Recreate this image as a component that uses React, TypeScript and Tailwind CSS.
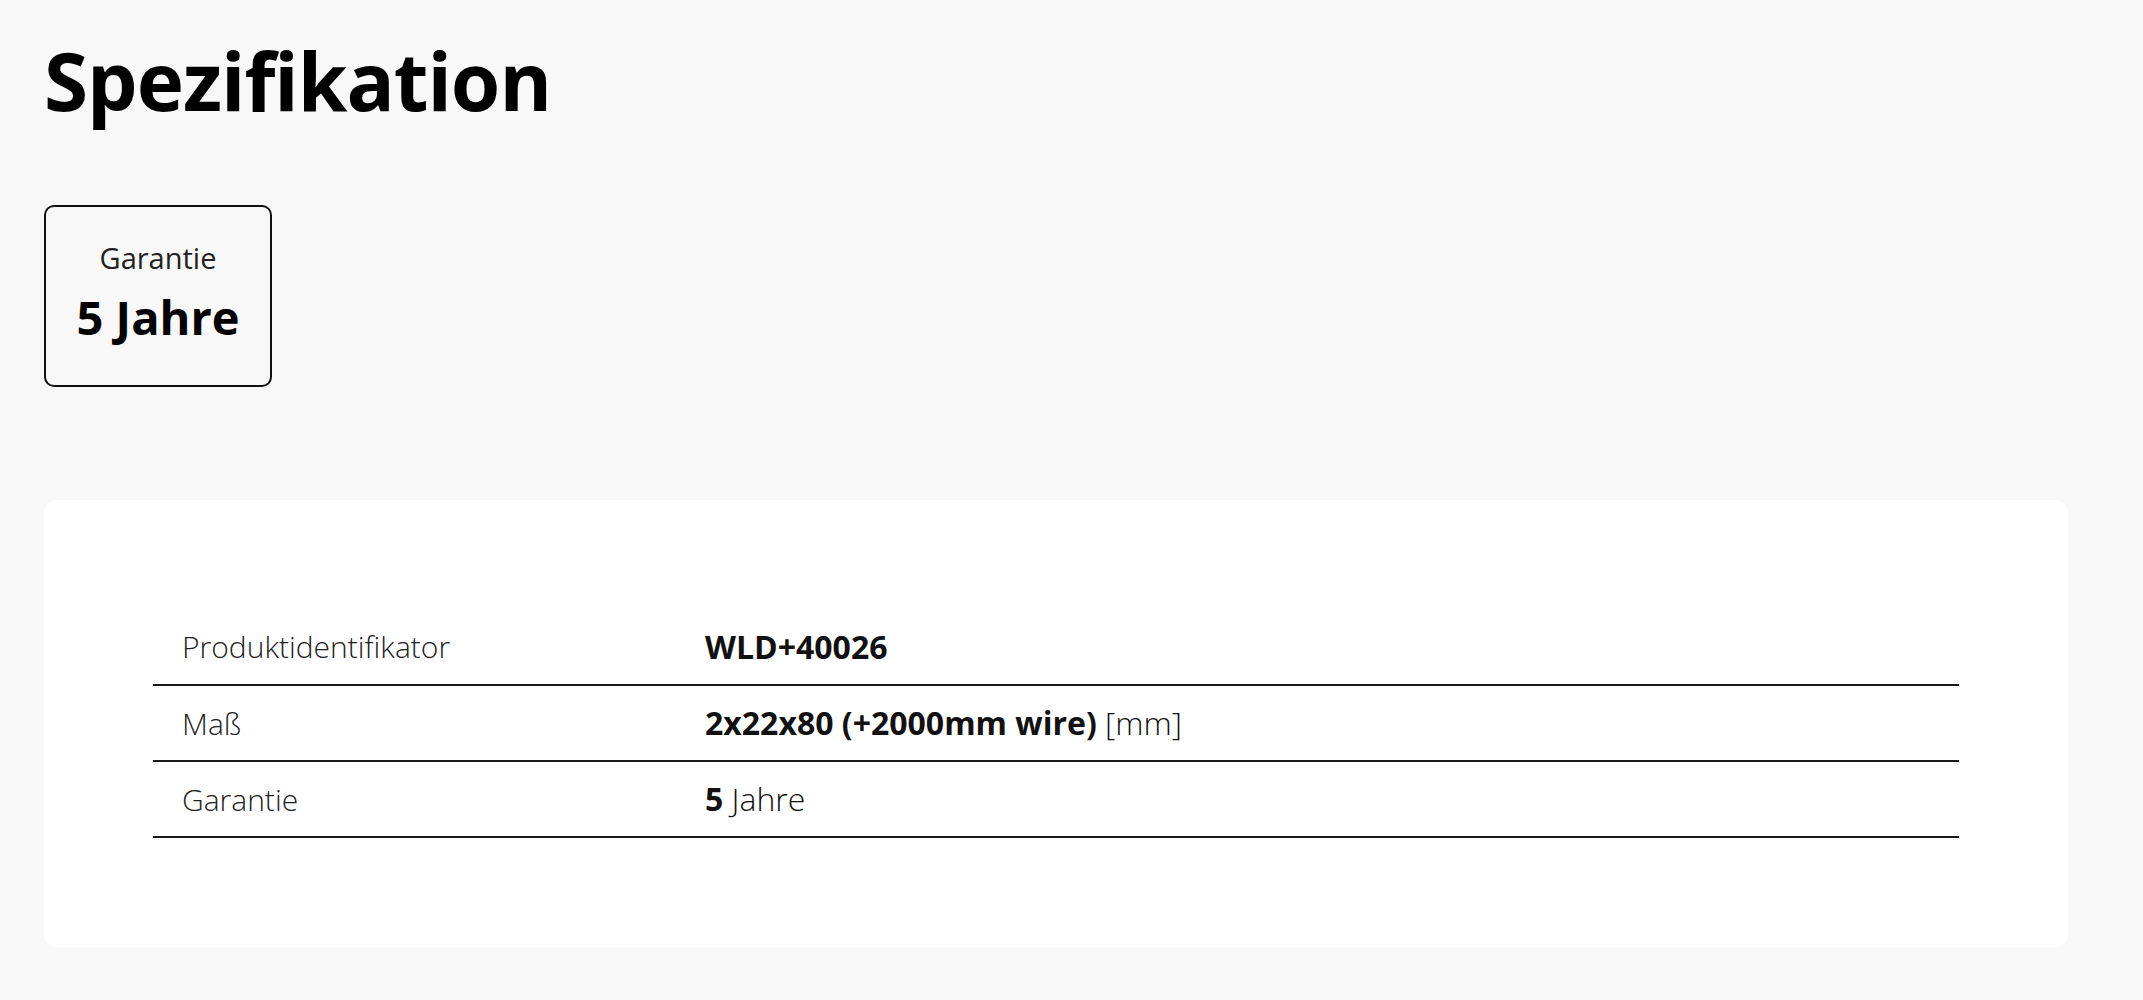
const rows = [
  { label: "Produktidentifikator", value: <span className="font-bold">WLD+40026</span> },
  {
    label: "Maß",
    value: (
      <>
        <span className="font-bold">2x22x80 (+2000mm wire)</span> <span className="font-light">[mm]</span>
      </>
    ),
  },
  {
    label: "Garantie",
    value: (
      <>
        <span className="font-bold">5</span> <span className="font-light">Jahre</span>
      </>
    ),
  },
]

const App = () => {
  return (
    <div className="min-h-screen bg-[#f8f8f8] pt-[32px] pr-[75px] pb-[53px] pl-[44px] font-['Open_Sans',sans-serif] text-[#111]">
      <h1 className="text-[80px] leading-[1.2] font-bold tracking-[-1px] text-black">Spezifikation</h1>

      <div className="mt-[77px] flex h-[182px] w-[228px] flex-col items-center justify-center rounded-[10px] border-2 border-[#111] pb-[8px]">
        <span className="text-[29px] leading-[38px] font-normal text-[#222]">Garantie</span>
        <span className="mt-[12px] text-[47px] leading-[56px] font-bold text-black">5 Jahre</span>
      </div>

      <div className="mt-[113px] rounded-[12px] bg-white p-[109px]">
        <table className="w-full border-collapse">
          <tbody>
            {rows.map((row) => (
              <tr key={row.label} className="h-[76px] border-b-2 border-[#1a1a1a]">
                <td className="w-[523px] pl-[29px] text-[30px] font-light text-[#222]">{row.label}</td>
                <td className="pl-[29px] text-[32px] text-[#111]">{row.value}</td>
              </tr>
            ))}
          </tbody>
        </table>
      </div>
    </div>
  )
}

export default App
